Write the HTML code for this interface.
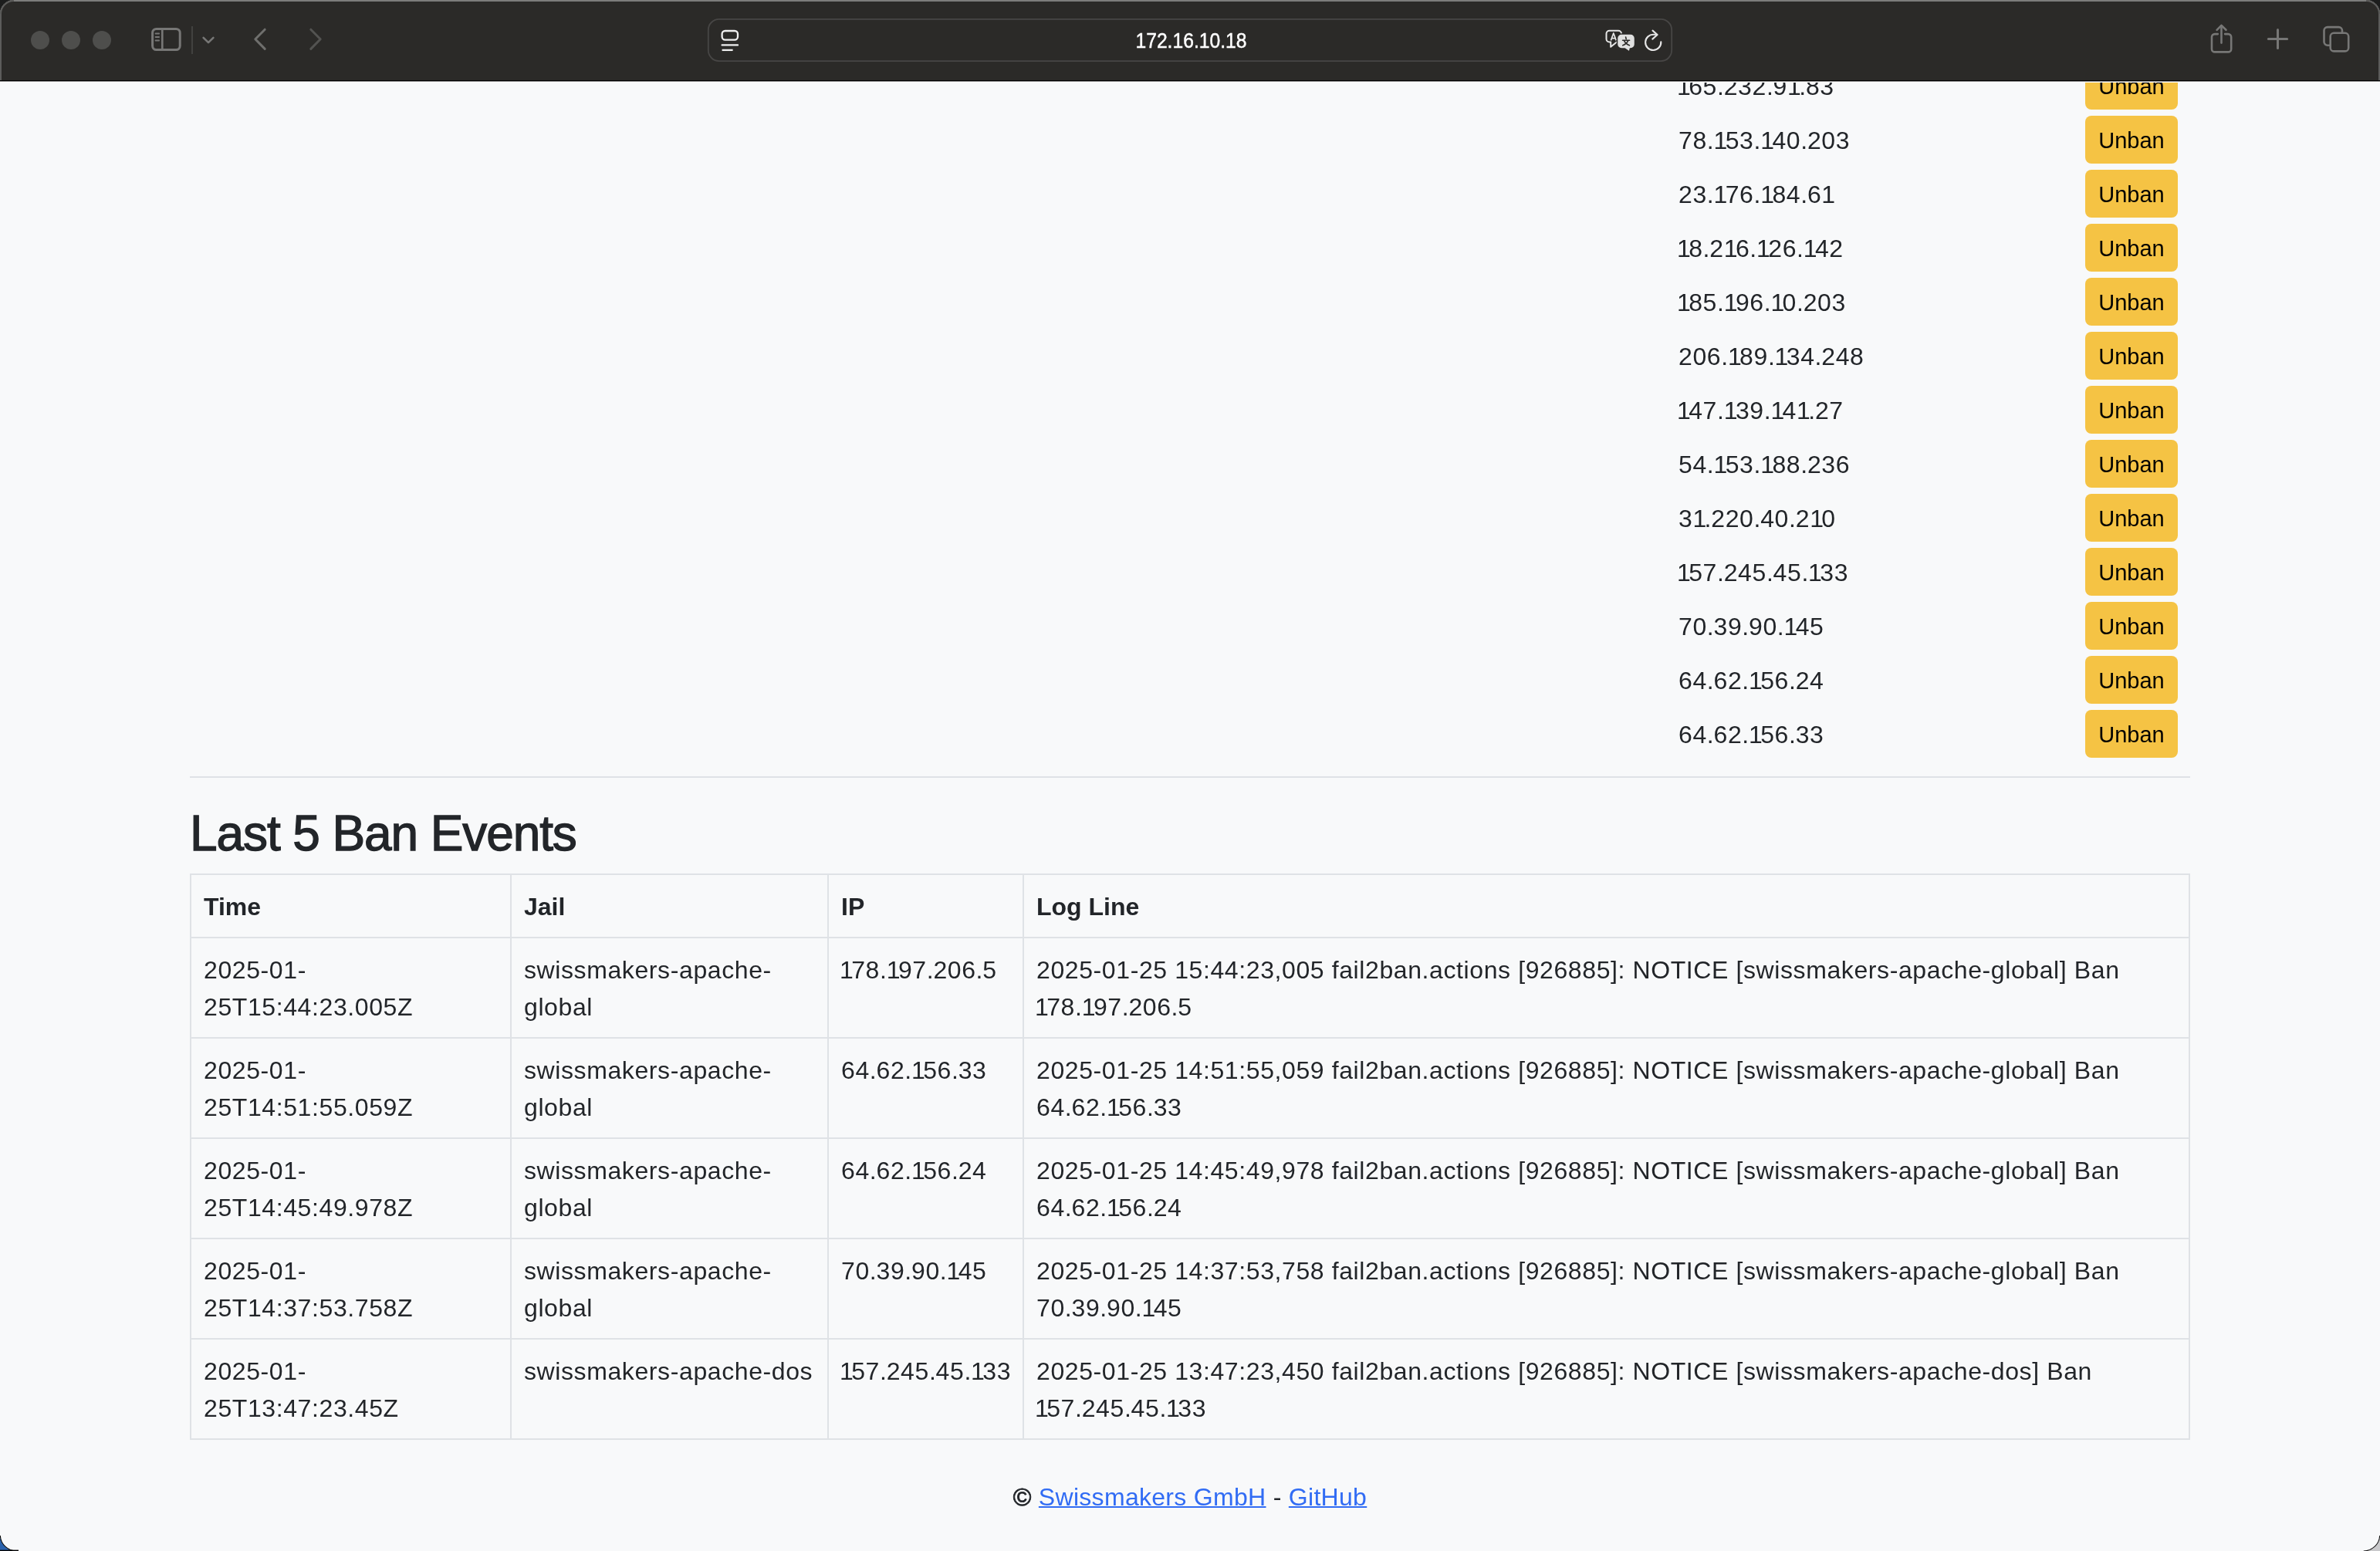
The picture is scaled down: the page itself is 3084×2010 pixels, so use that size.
<!DOCTYPE html>
<html><head><meta charset="utf-8"><title>fail2ban</title>
<style>
html,body{margin:0;padding:0;width:3084px;height:2010px;overflow:hidden;background:#1c1d1d;}
body{font-family:"Liberation Sans",sans-serif;color:#222529;position:relative;}
#win{will-change:transform;position:absolute;left:0;top:0;width:3084px;height:2010px;background:#f8f9fa;border-radius:18px 18px 0 0;overflow:hidden;}
.t{position:absolute;white-space:pre;line-height:1;}
.ip{font-size:32px;letter-spacing:0.6px;}
.btn{position:absolute;left:2702px;width:120px;height:62px;background:#f5c344;border-radius:8px;}
.btn span{position:absolute;left:0;width:120px;text-align:center;top:17.8px;font-size:29px;line-height:1;color:#000;}
.hl{position:absolute;background:#dfe2e6;height:2px;}
.vl{position:absolute;background:#dfe2e6;width:2px;}
.c{font-size:32px;letter-spacing:0.6px;}
.n{font-size:32px;letter-spacing:0.6px;}
i{font-style:normal}
.o{letter-spacing:-2.6px}
.p{letter-spacing:-0.2px}
.th{font-size:32px;font-weight:bold;}
#tb{position:absolute;left:0;top:0;}
.u{color:#316cf4;text-decoration:underline;text-decoration-thickness:2px;text-underline-offset:1px}
</style></head><body><div id="win">

<div class="t ip" style="left:2173px;top:96.2px"><i class="o">1</i>65<i class="p">.</i>232<i class="p">.</i>9<i class="o">1</i><i class="p">.</i>83</div>
<div class="btn" style="top:80px"><span>Unban</span></div>
<div class="t ip" style="left:2175px;top:166.2px">78<i class="p">.</i><i class="o">1</i>53<i class="p">.</i><i class="o">1</i>40<i class="p">.</i>203</div>
<div class="btn" style="top:150px"><span>Unban</span></div>
<div class="t ip" style="left:2175px;top:236.2px">23<i class="p">.</i><i class="o">1</i>76<i class="p">.</i><i class="o">1</i>84<i class="p">.</i>6<i class="o">1</i></div>
<div class="btn" style="top:220px"><span>Unban</span></div>
<div class="t ip" style="left:2173px;top:306.2px"><i class="o">1</i>8<i class="p">.</i>2<i class="o">1</i>6<i class="p">.</i><i class="o">1</i>26<i class="p">.</i><i class="o">1</i>42</div>
<div class="btn" style="top:290px"><span>Unban</span></div>
<div class="t ip" style="left:2173px;top:376.2px"><i class="o">1</i>85<i class="p">.</i><i class="o">1</i>96<i class="p">.</i><i class="o">1</i>0<i class="p">.</i>203</div>
<div class="btn" style="top:360px"><span>Unban</span></div>
<div class="t ip" style="left:2175px;top:446.2px">206<i class="p">.</i><i class="o">1</i>89<i class="p">.</i><i class="o">1</i>34<i class="p">.</i>248</div>
<div class="btn" style="top:430px"><span>Unban</span></div>
<div class="t ip" style="left:2173px;top:516.2px"><i class="o">1</i>47<i class="p">.</i><i class="o">1</i>39<i class="p">.</i><i class="o">1</i>4<i class="o">1</i><i class="p">.</i>27</div>
<div class="btn" style="top:500px"><span>Unban</span></div>
<div class="t ip" style="left:2175px;top:586.2px">54<i class="p">.</i><i class="o">1</i>53<i class="p">.</i><i class="o">1</i>88<i class="p">.</i>236</div>
<div class="btn" style="top:570px"><span>Unban</span></div>
<div class="t ip" style="left:2175px;top:656.2px">3<i class="o">1</i><i class="p">.</i>220<i class="p">.</i>40<i class="p">.</i>2<i class="o">1</i>0</div>
<div class="btn" style="top:640px"><span>Unban</span></div>
<div class="t ip" style="left:2173px;top:726.2px"><i class="o">1</i>57<i class="p">.</i>245<i class="p">.</i>45<i class="p">.</i><i class="o">1</i>33</div>
<div class="btn" style="top:710px"><span>Unban</span></div>
<div class="t ip" style="left:2175px;top:796.2px">70<i class="p">.</i>39<i class="p">.</i>90<i class="p">.</i><i class="o">1</i>45</div>
<div class="btn" style="top:780px"><span>Unban</span></div>
<div class="t ip" style="left:2175px;top:866.2px">64<i class="p">.</i>62<i class="p">.</i><i class="o">1</i>56<i class="p">.</i>24</div>
<div class="btn" style="top:850px"><span>Unban</span></div>
<div class="t ip" style="left:2175px;top:936.2px">64<i class="p">.</i>62<i class="p">.</i><i class="o">1</i>56<i class="p">.</i>33</div>
<div class="btn" style="top:920px"><span>Unban</span></div>
<div class="hl" style="left:246px;top:1006px;width:2592px;background:#dfe2e6"></div>
<div class="t" style="left:246px;top:1047.8px;font-size:64px;letter-spacing:-1.1px;-webkit-text-stroke:1.3px #222529">Last 5 Ban Events</div>
<div class="hl" style="left:246px;top:1132px;width:2592px"></div>
<div class="hl" style="left:246px;top:1214px;width:2592px"></div>
<div class="hl" style="left:246px;top:1344px;width:2592px"></div>
<div class="hl" style="left:246px;top:1474px;width:2592px"></div>
<div class="hl" style="left:246px;top:1604px;width:2592px"></div>
<div class="hl" style="left:246px;top:1734px;width:2592px"></div>
<div class="hl" style="left:246px;top:1864px;width:2592px"></div>
<div class="vl" style="left:246px;top:1132px;height:734px"></div>
<div class="vl" style="left:661px;top:1132px;height:734px"></div>
<div class="vl" style="left:1072px;top:1132px;height:734px"></div>
<div class="vl" style="left:1325px;top:1132px;height:734px"></div>
<div class="vl" style="left:2836px;top:1132px;height:734px"></div>
<div class="t th" style="left:264px;top:1158.9px">Time</div>
<div class="t th" style="left:679px;top:1158.9px">Jail</div>
<div class="t th" style="left:1090px;top:1158.9px">IP</div>
<div class="t th" style="left:1343px;top:1158.9px">Log Line</div>
<div class="t c" style="left:264px;top:1241.2px">2025-01-</div>
<div class="t c" style="left:264px;top:1289.2px">25T15:44:23.005Z</div>
<div class="t c" style="left:679px;top:1241.2px">swissmakers-apache-</div>
<div class="t c" style="left:679px;top:1289.2px">global</div>
<div class="t n" style="left:1088px;top:1241.2px"><i class="o">1</i>78<i class="p">.</i><i class="o">1</i>97<i class="p">.</i>206<i class="p">.</i>5</div>
<div class="t c" style="left:1343px;top:1241.2px">2025-01-25 15:44:23,005 fail2ban.actions [926885]: NOTICE [swissmakers-apache-global] Ban</div>
<div class="t n" style="left:1341px;top:1289.2px"><i class="o">1</i>78<i class="p">.</i><i class="o">1</i>97<i class="p">.</i>206<i class="p">.</i>5</div>
<div class="t c" style="left:264px;top:1371.2px">2025-01-</div>
<div class="t c" style="left:264px;top:1419.2px">25T14:51:55.059Z</div>
<div class="t c" style="left:679px;top:1371.2px">swissmakers-apache-</div>
<div class="t c" style="left:679px;top:1419.2px">global</div>
<div class="t n" style="left:1090px;top:1371.2px">64<i class="p">.</i>62<i class="p">.</i><i class="o">1</i>56<i class="p">.</i>33</div>
<div class="t c" style="left:1343px;top:1371.2px">2025-01-25 14:51:55,059 fail2ban.actions [926885]: NOTICE [swissmakers-apache-global] Ban</div>
<div class="t n" style="left:1343px;top:1419.2px">64<i class="p">.</i>62<i class="p">.</i><i class="o">1</i>56<i class="p">.</i>33</div>
<div class="t c" style="left:264px;top:1501.2px">2025-01-</div>
<div class="t c" style="left:264px;top:1549.2px">25T14:45:49.978Z</div>
<div class="t c" style="left:679px;top:1501.2px">swissmakers-apache-</div>
<div class="t c" style="left:679px;top:1549.2px">global</div>
<div class="t n" style="left:1090px;top:1501.2px">64<i class="p">.</i>62<i class="p">.</i><i class="o">1</i>56<i class="p">.</i>24</div>
<div class="t c" style="left:1343px;top:1501.2px">2025-01-25 14:45:49,978 fail2ban.actions [926885]: NOTICE [swissmakers-apache-global] Ban</div>
<div class="t n" style="left:1343px;top:1549.2px">64<i class="p">.</i>62<i class="p">.</i><i class="o">1</i>56<i class="p">.</i>24</div>
<div class="t c" style="left:264px;top:1631.2px">2025-01-</div>
<div class="t c" style="left:264px;top:1679.2px">25T14:37:53.758Z</div>
<div class="t c" style="left:679px;top:1631.2px">swissmakers-apache-</div>
<div class="t c" style="left:679px;top:1679.2px">global</div>
<div class="t n" style="left:1090px;top:1631.2px">70<i class="p">.</i>39<i class="p">.</i>90<i class="p">.</i><i class="o">1</i>45</div>
<div class="t c" style="left:1343px;top:1631.2px">2025-01-25 14:37:53,758 fail2ban.actions [926885]: NOTICE [swissmakers-apache-global] Ban</div>
<div class="t n" style="left:1343px;top:1679.2px">70<i class="p">.</i>39<i class="p">.</i>90<i class="p">.</i><i class="o">1</i>45</div>
<div class="t c" style="left:264px;top:1761.2px">2025-01-</div>
<div class="t c" style="left:264px;top:1809.2px">25T13:47:23.45Z</div>
<div class="t c" style="left:679px;top:1761.2px">swissmakers-apache-dos</div>
<div class="t n" style="left:1088px;top:1761.2px"><i class="o">1</i>57<i class="p">.</i>245<i class="p">.</i>45<i class="p">.</i><i class="o">1</i>33</div>
<div class="t c" style="left:1343px;top:1761.2px">2025-01-25 13:47:23,450 fail2ban.actions [926885]: NOTICE [swissmakers-apache-dos] Ban</div>
<div class="t n" style="left:1341px;top:1809.2px"><i class="o">1</i>57<i class="p">.</i>245<i class="p">.</i>45<i class="p">.</i><i class="o">1</i>33</div>
<div class="t" style="left:0;width:3084px;text-align:center;top:1923.5px;font-size:32px;letter-spacing:0.3px"><span style="-webkit-text-stroke:0.9px #222529">©</span> <span class="u">Swissmakers GmbH</span> - <span class="u">GitHub</span></div>
<svg id="tb" width="3084" height="107" viewBox="0 0 3084 107">
<rect x="0" y="0" width="3084" height="105" fill="#2b2a28"/>
<path d="M1,105 V18 A17,17 0 0 1 18,1 H3066 A17,17 0 0 1 3083,18 V105" fill="none" stroke="#5c5c5b" stroke-width="2"/>
<path d="M18,1 H3066" stroke="#7c7c7b" stroke-width="2"/>
<rect x="0" y="104" width="3084" height="1" fill="#000"/><rect x="0" y="105" width="3084" height="1" fill="#8a8a8a"/><rect x="0" y="106" width="3084" height="1" fill="#ffffff"/>
<circle cx="52" cy="52" r="12" fill="#4e4e4c"/>
<circle cx="92" cy="52" r="12" fill="#4e4e4c"/>
<circle cx="132" cy="52" r="12" fill="#4e4e4c"/>
<g fill="none" stroke="#777776" stroke-linecap="round" stroke-linejoin="round">
<rect x="197.6" y="37.4" width="35.6" height="27.2" rx="5" stroke-width="3"/>
<line x1="210.3" y1="37.4" x2="210.3" y2="64.6" stroke-width="2.6"/>
<line x1="201.6" y1="43.6" x2="206" y2="43.6" stroke-width="2"/>
<line x1="201.6" y1="48" x2="206" y2="48" stroke-width="2"/>
<line x1="201.6" y1="52.4" x2="206" y2="52.4" stroke-width="2"/>
<polyline points="263.6,48.8 270,55.2 276.4,48.8" stroke-width="2.6"/>
<polyline points="343.2,38.2 330.8,50.8 343.2,63.4" stroke="#6f6f6d" stroke-width="3"/>
<polyline points="402.8,38.2 415.2,50.8 402.8,63.4" stroke="#535351" stroke-width="3"/>
</g>
<line x1="249" y1="34" x2="249" y2="70" stroke="#454543" stroke-width="1.8"/>
<rect x="917.8" y="24.9" width="1248.4" height="54.2" rx="14" fill="#2b2a28" stroke="#474645" stroke-width="1.8"/>
<g fill="none" stroke="#efefef" stroke-linecap="round">
<rect x="935.6" y="40" width="20.4" height="11.6" rx="4" stroke-width="2.3"/>
<line x1="935.6" y1="58.4" x2="956" y2="58.4" stroke-width="2.3"/>
<line x1="935.6" y1="64.9" x2="949.6" y2="64.9" stroke-width="2.3" stroke-linecap="butt"/>
</g>
<text x="0" y="0" transform="translate(1543.5,62.3) scale(0.915,1)" text-anchor="middle" font-family="Liberation Sans" font-size="27" fill="#ffffff" stroke="#ffffff" stroke-width="0.45">172.16.10.18</text>
<g>
<path d="M2085.5,39.8 H2097 A4,4 0 0 1 2101,43.8 V50.5 A4,4 0 0 1 2097,54.5 H2095 L2087.2,60.8 V54.5 H2085.5 A4,4 0 0 1 2081.5,50.5 V43.8 A4,4 0 0 1 2085.5,39.8 Z" fill="none" stroke="#e6e6e6" stroke-width="2" stroke-linejoin="round"/>
<path d="M2087.4,52.4 L2090.8,43 L2094.2,52.4 M2088.5,49.6 H2093.1" fill="none" stroke="#e6e6e6" stroke-width="1.7" stroke-linejoin="round"/>
<path d="M2101,44 H2113 A5.5,5.5 0 0 1 2118.5,49.5 V57.5 A5.5,5.5 0 0 1 2113,63 H2112.4 L2111.4,67.2 L2105.4,63 H2101 A5.5,5.5 0 0 1 2095.5,57.5 V49.5 A5.5,5.5 0 0 1 2101,44 Z" fill="#e0e0e0" stroke="#2b2a28" stroke-width="1.5"/>
<g stroke="#2b2a28" stroke-width="1.6" fill="none" stroke-linecap="round">
<line x1="2102.6" y1="52.2" x2="2111.6" y2="52.2"/>
<line x1="2106.6" y1="48" x2="2107.2" y2="50.6"/>
<path d="M2104.6,52.8 Q2106.6,57 2111.4,58.8"/>
<path d="M2109.6,52.8 Q2107.6,57 2102.8,58.8"/>
</g>
</g>
<g fill="none" stroke="#e6e6e6" stroke-width="2.1" stroke-linecap="round" stroke-linejoin="round">
<path d="M2152.3,54.3 A10.1,10.1 0 1 1 2143,44.8 H2146.5"/>
<polyline points="2141.5,39.6 2147.6,45 2141.3,50.6"/>
</g>
<g fill="none" stroke="#777776" stroke-width="2.6" stroke-linecap="round" stroke-linejoin="round">
<path d="M2873.8,44.1 H2870 A4,4 0 0 0 2866,48.1 V63.4 A4,4 0 0 0 2870,67.4 H2887.2 A4,4 0 0 0 2891.2,63.4 V48.1 A4,4 0 0 0 2887.2,44.1 H2883.1"/>
<line x1="2878.5" y1="33.6" x2="2878.5" y2="55.6"/>
<polyline points="2872.6,38.8 2878.5,32.9 2884.5,38.8"/>
<line x1="2939.4" y1="50.5" x2="2963.6" y2="50.5" stroke-width="3"/>
<line x1="2951.5" y1="38.4" x2="2951.5" y2="62.6" stroke-width="3"/>
<path d="M3019.7,58.7 H3016 A4.5,4.5 0 0 1 3011.5,54.2 V39.6 A4.5,4.5 0 0 1 3016,35.1 H3030.5 A4.5,4.5 0 0 1 3035,39.6 V42.8"/>
<rect x="3019.7" y="42.8" width="23.5" height="23.6" rx="4.5"/>
</g>
</svg>
<svg style="position:absolute;left:0;top:1986px" width="24" height="24" viewBox="0 0 24 24"><path d="M0,4 A21,21 0 0 0 21,24 H0 Z" fill="#2a62ad"/><path d="M0.3,4 A21,21 0 0 0 21.3,24" fill="none" stroke="#050505" stroke-width="1.1"/><rect x="0" y="22.6" width="24" height="1.4" fill="#050505"/></svg>
<svg style="position:absolute;left:3060px;top:1986px" width="24" height="24" viewBox="0 0 24 24"><path d="M24,4 A21,21 0 0 1 3,24 H24 Z" fill="#c9c9cb"/><path d="M23.7,4 A21,21 0 0 1 2.7,24" fill="none" stroke="#1a1a1a" stroke-width="1.1"/></svg>
</div></body></html>
